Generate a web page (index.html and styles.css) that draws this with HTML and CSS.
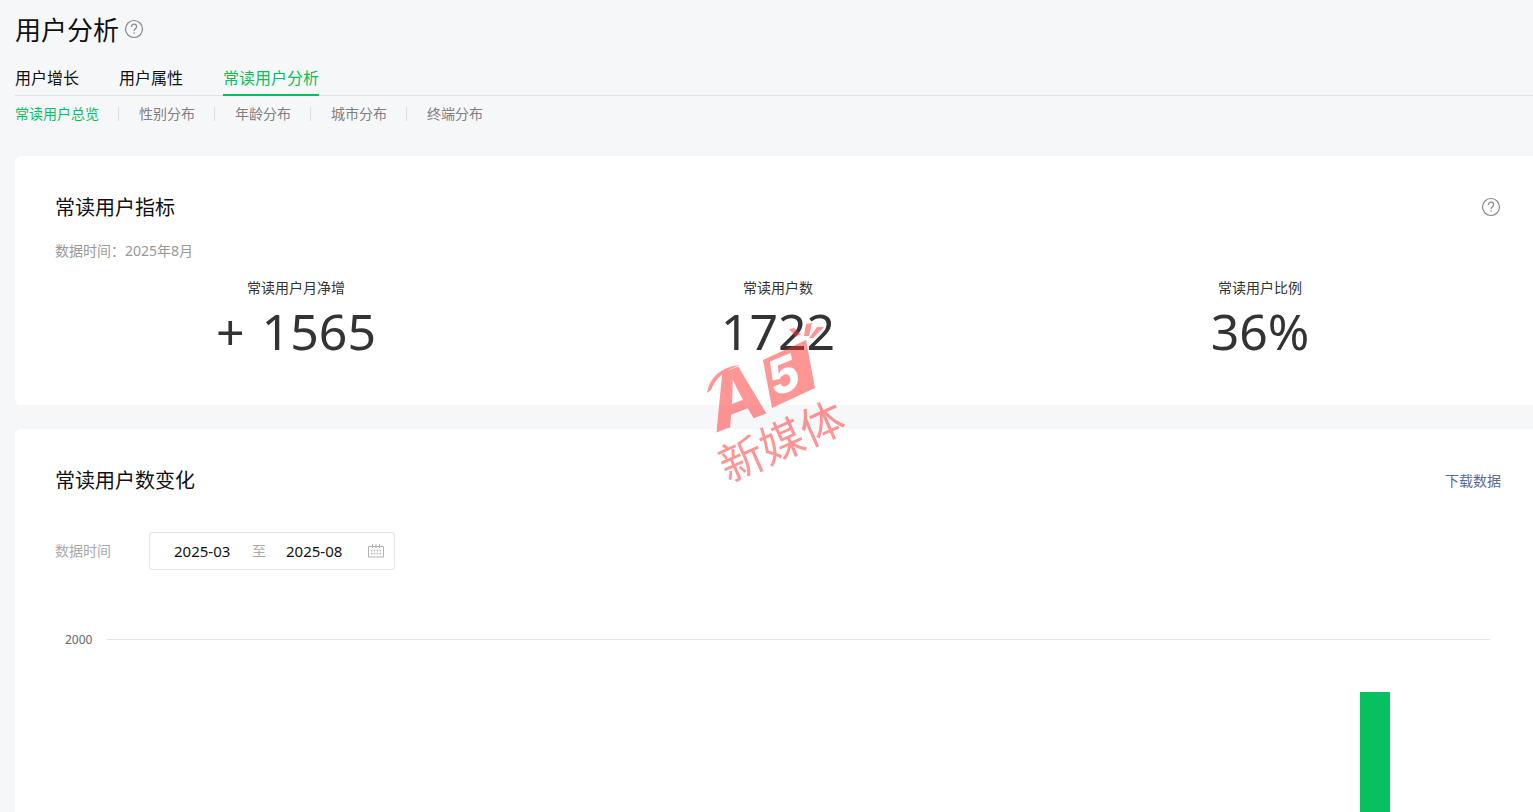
FILE: index.html
```html
<!DOCTYPE html>
<html lang="zh-CN">
<head>
  <meta charset="UTF-8" />
  <meta name="viewport" content="width=device-width, initial-scale=1" />
  <title>用户分析</title>
  <link rel="stylesheet" href="styles.css">
</head>
<body>

  <header class="page-header">
    <div class="title-row">
      <h1 class="page-title">用户分析</h1>
      <button class="help" type="button" aria-label="帮助">
        <svg viewBox="0 0 20 20" width="20" height="20">
          <circle cx="10" cy="10" r="8.5"/>
          <path d="M7.4 8c0-1.8 1.1-2.8 2.6-2.8s2.6 1 2.6 2.5c0 2-2.5 2.2-2.5 4.3M10.1 13.2v1.5"/>
        </svg>
      </button>
    </div>
    <nav class="tabs">
      <a class="tab" href="#growth">用户增长</a>
      <a class="tab" href="#attr">用户属性</a>
      <a class="tab active" href="#regular">常读用户分析</a>
    </nav>
    <nav class="subtabs">
      <a class="subtab active" href="#overview">常读用户总览</a>
      <a class="subtab" href="#gender">性别分布</a>
      <a class="subtab" href="#age">年龄分布</a>
      <a class="subtab" href="#city">城市分布</a>
      <a class="subtab" href="#device">终端分布</a>
    </nav>
  </header>

  <main class="cards">
    <section class="card">
      <div class="card-head">
        <h2 class="card-title">常读用户指标</h2>
        <button class="help" type="button" aria-label="指标说明">
          <svg viewBox="0 0 20 20" width="20" height="20">
            <circle cx="10" cy="10" r="8.5"/>
            <path d="M7.4 8c0-1.8 1.1-2.8 2.6-2.8s2.6 1 2.6 2.5c0 2-2.5 2.2-2.5 4.3M10.1 13.2v1.5"/>
          </svg>
        </button>
      </div>
      <p class="data-time">数据时间：2025年8月</p>
      <dl class="metrics">
        <div class="metric">
          <dt>常读用户月净增</dt>
          <dd><span class="sign">+</span> 1565</dd>
        </div>
        <div class="metric">
          <dt>常读用户数</dt>
          <dd>1722</dd>
        </div>
        <div class="metric">
          <dt>常读用户比例</dt>
          <dd>36%</dd>
        </div>
      </dl>
    </section>

    <section class="card card-chart">
      <div class="card-head">
        <h2 class="card-title">常读用户数变化</h2>
        <a class="download" href="#download">下载数据</a>
      </div>
      <div class="filter">
        <label class="filter-label" for="date-from">数据时间</label>
        <div class="range">
          <input class="date" id="date-from" type="text" value="2025-03">
          <span class="range-sep">至</span>
          <input class="date" type="text" value="2025-08" aria-label="结束月份">
          <svg class="calendar" viewBox="0 0 16 14" width="16" height="14">
            <path class="calendar-frame" d="M.5 2.5h15v10.5H.5zM4.5 0v4M8 0v4M11.5 0v4"/>
            <path class="calendar-dots" d="M3 6.5h10M3 9.5h10"/>
          </svg>
        </div>
      </div>
      <div class="chart">
        <span class="axis-label">2000</span>
        <div class="plot">
          <div class="slot"></div>
          <div class="slot"></div>
          <div class="slot"></div>
          <div class="slot"></div>
          <div class="slot"></div>
          <div class="slot"><div class="bar" style="height: 86.1%"></div></div>
        </div>
      </div>
    </section>
  </main>

  <!-- Watermark over the page -->
  <svg class="watermark" viewBox="0 0 180 200" width="180" height="200" aria-hidden="true">
    <mask id="cut">
      <rect width="180" height="200" fill="#fff"/>
      <text class="mark-letter" x="0" y="0" font-size="48" transform="translate(84 97) rotate(-22)" fill="#000">5</text>
    </mask>
    <path d="M16 93C19 76 31 67 49 65C35 70 25 77 20 90Z"/>
    <text class="mark-letter" x="0" y="0" font-size="74" transform="translate(27 132) rotate(-21)">A</text>
    <path mask="url(#cut)" d="M72 60L115 40L124 88L81 108Z"/>
    <path d="M98 29L103 28L110 34L105 37ZM115 24L121 23L118 36L113 36ZM126 27L133 27L122 38L118 38Z"/>
    <text class="mark-name" x="0" y="0" font-size="44" transform="translate(37 183) rotate(-24)">新媒体</text>
  </svg>

</body>
</html>
```

FILE: styles.css
```css
* {
  box-sizing: border-box;
}

body {
  display: flex;
  flex-direction: column;
  margin: 0;
  height: 100vh;
  overflow: hidden;
  background-color: #f6f7f9;
  font-family: "Noto Sans", "Noto Sans CJK SC", sans-serif;
  font-size: 14px;
  line-height: 20px;
  color: #111;
}

h1, h2, p, dl, dd {
  margin: 0;
  font-weight: 400;
}

a {
  color: inherit;
  text-decoration: none;
}

.page-header {
  padding: 12px 0 0 15px;
}

.title-row {
  display: flex;
  align-items: center;
  gap: 5px;
}

.page-title {
  font-size: 26px;
  line-height: 36px;
}

.help {
  display: block;
  width: 20px;
  height: 20px;
  margin-bottom: 3px;
  padding: 0;
  border: 0;
  background: none;
  cursor: pointer;
}

.help svg {
  display: block;
  fill: none;
  stroke: #888;
  stroke-width: 1.2;
}

/* Main tabs */
.tabs {
  display: flex;
  gap: 40px;
  margin-top: 16px;
  border-bottom: 1px solid #dfe2e5;
}

.tab {
  height: 32px;
  margin-bottom: -1px;
  font-size: 16px;
  line-height: 28px;
}

.tab.active {
  color: #07c160;
  border-bottom: 2px solid #07c160;
}

.subtabs {
  display: flex;
  padding-top: 8px;
}

.subtab {
  display: flex;
  align-items: center;
  color: #808080;
}

.subtab.active {
  color: #07c160;
}

.subtab + .subtab::before {
  content: "";
  height: 14px;
  margin: 0 20px 0 19px;
  border-left: 1px solid #dcdfe3;
}

/* Cards */
.cards {
  display: flex;
  flex: 1;
  flex-direction: column;
  gap: 24px;
  min-height: 0;
  padding: 32px 0 0 15px;
}

.card {
  padding: 37px 32px 44px 40px;
  border-radius: 6px 0 0 6px;
  background-color: #fff;
}

.card-head {
  display: flex;
  justify-content: space-between;
  align-items: center;
}

.card-title {
  font-size: 20px;
  line-height: 30px;
}

.data-time {
  margin-top: 18px;
  color: #999;
}

.metrics {
  display: grid;
  grid-template-columns: repeat(3, 1fr);
  margin-top: 17px;
  text-align: center;
}

.metric {
  color: #333;
}

.metric dd {
  margin-top: 3px;
  font-size: 50px;
  line-height: 60px;
}

.sign {
  margin-right: 4px;
}

.download {
  color: #576b95;
}

.card-chart {
  flex: 1;
  min-height: 0;
  padding-bottom: 0;
  border-bottom-left-radius: 0;
  overflow: hidden;
}

.filter {
  display: flex;
  align-items: center;
  gap: 38px;
  margin-top: 36px;
}

.filter-label {
  color: #aaa;
}

.range {
  display: flex;
  align-items: center;
  height: 38px;
  padding: 0 10px 0 24px;
  border: 1px solid #e4e5e7;
  border-radius: 3px;
}

.date {
  width: 78px;
  padding: 0;
  border: 0;
  background: none;
  font: inherit;
  font-size: 15px;
  color: #111;
}

.range-sep {
  width: 34px;
  color: #aaa;
}

.date + .calendar {
  margin-left: 4px;
}

.calendar {
  fill: none;
  stroke: #b2b2b2;
}

.calendar-dots {
  stroke-width: 1.5;
  stroke-dasharray: 1.5 1.3;
}

/* Chart */
.chart {
  display: flex;
  gap: 15px;
  margin-top: 69px;
  padding: 0 11px 0 10px;
}

.axis-label {
  margin-top: -9px;
  font-size: 12px;
  color: #666;
}

.plot {
  display: grid;
  flex: 1;
  grid-template-columns: repeat(6, 1fr);
  height: 374px;
  border-top: 1px solid #e4e5e7;
}

.slot {
  display: flex;
  align-items: flex-end;
  justify-content: center;
}

.bar {
  width: 30px;
  background-color: #07c160;
}

.watermark {
  position: absolute;
  top: 300px;
  left: calc(50% - 76px);
  overflow: visible;
  fill: #ff3030;
  opacity: 0.5;
  pointer-events: none;
}

.mark-letter {
  font-family: Inter, sans-serif;
  font-weight: 800;
  font-style: italic;
}

.mark-name {
  font-family: "Noto Sans CJK SC", sans-serif;
}
```
